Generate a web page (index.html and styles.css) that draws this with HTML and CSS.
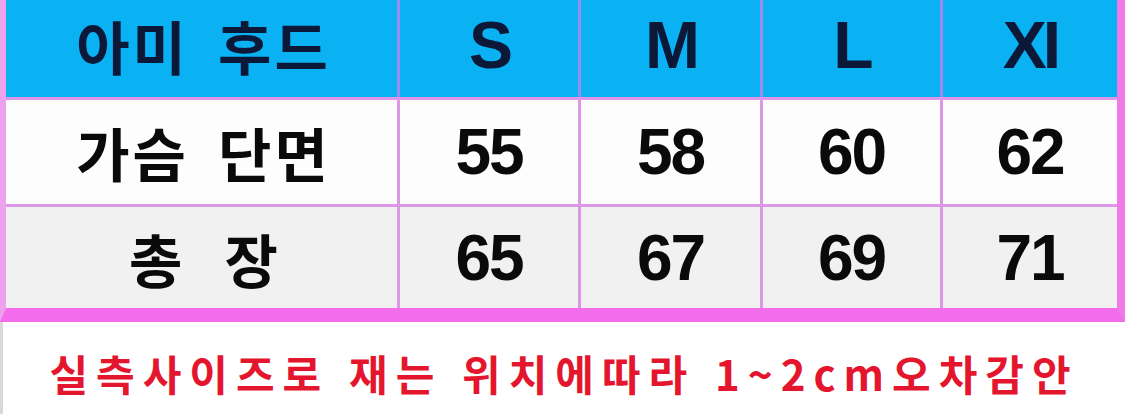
FILE: index.html
```html
<!DOCTYPE html>
<html lang="ko">
<head>
<meta charset="utf-8">
<title>아미 후드 사이즈</title>
<link rel="stylesheet" href="styles.css">
</head>
<body>
<div class="chart">
  <div class="row head">
    <div class="cell label">아미 후드</div>
    <div class="cell size">S</div>
    <div class="cell size">M</div>
    <div class="cell size">L</div>
    <div class="cell size">XI</div>
  </div>
  <div class="row body white">
    <div class="cell label">가슴 단면</div>
    <div class="cell num">55</div>
    <div class="cell num">58</div>
    <div class="cell num">60</div>
    <div class="cell num">62</div>
  </div>
  <div class="row body gray">
    <div class="cell label">총 장</div>
    <div class="cell num">65</div>
    <div class="cell num">67</div>
    <div class="cell num">69</div>
    <div class="cell num">71</div>
  </div>
</div>
<div class="note">실측사이즈로 재는 위치에따라 1~2cm오차감안</div>
</body>
</html>
```
FILE: styles.css
```css
html, body {
  margin: 0;
  padding: 0;
}
body {
  width: 1125px;
  height: 414px;
  overflow: hidden;
  background: #ffffff;
  font-family: "Noto Sans CJK KR", "Noto Sans", sans-serif;
}
.chart {
  display: flex;
  flex-direction: column;
  gap: 3px;
  background: #dc98e6;
  border-left: 6px solid #eea2ee;
  border-right: 8px solid #f07ae8;
  border-bottom: 14px solid #f26cec;
}
.row {
  display: grid;
  grid-template-columns: 391px 178px 179px 177px 174px;
  gap: 3px;
}
.row.head {
  height: 97px;
  background: #9c8cf2;
}
.row.white { height: 104px; }
.row.gray { height: 101px; }
.cell {
  display: flex;
  align-items: center;
  justify-content: center;
  font-weight: 700;
}
.head .cell {
  background: #0ab2f4;
  color: #0b1838;
  padding-bottom: 8px;
}
.white .cell { background: #fdfdfd; color: #0a0a0a; }
.gray .cell { background: #f1f1f1; color: #0a0a0a; }
.label {
  font-size: 58px;
  letter-spacing: 3px;
  word-spacing: 10px;
  padding-left: 4px;
}
.gray .label {
  letter-spacing: 0;
  word-spacing: 26px;
}
.size {
  font-family: "Liberation Sans", Arial, sans-serif;
  font-size: 66px;
  letter-spacing: -4px;
}
.num {
  font-family: "Liberation Sans", Arial, sans-serif;
  font-size: 64px;
  letter-spacing: -2px;
}
.note {
  height: 92px;
  box-sizing: border-box;
  border-left: 3px solid #d9d9d9;
  display: flex;
  align-items: center;
  justify-content: center;
  color: #e3162e;
  font-weight: 700;
  font-size: 42px;
  letter-spacing: 8px;
  padding-top: 8px;
}
```
